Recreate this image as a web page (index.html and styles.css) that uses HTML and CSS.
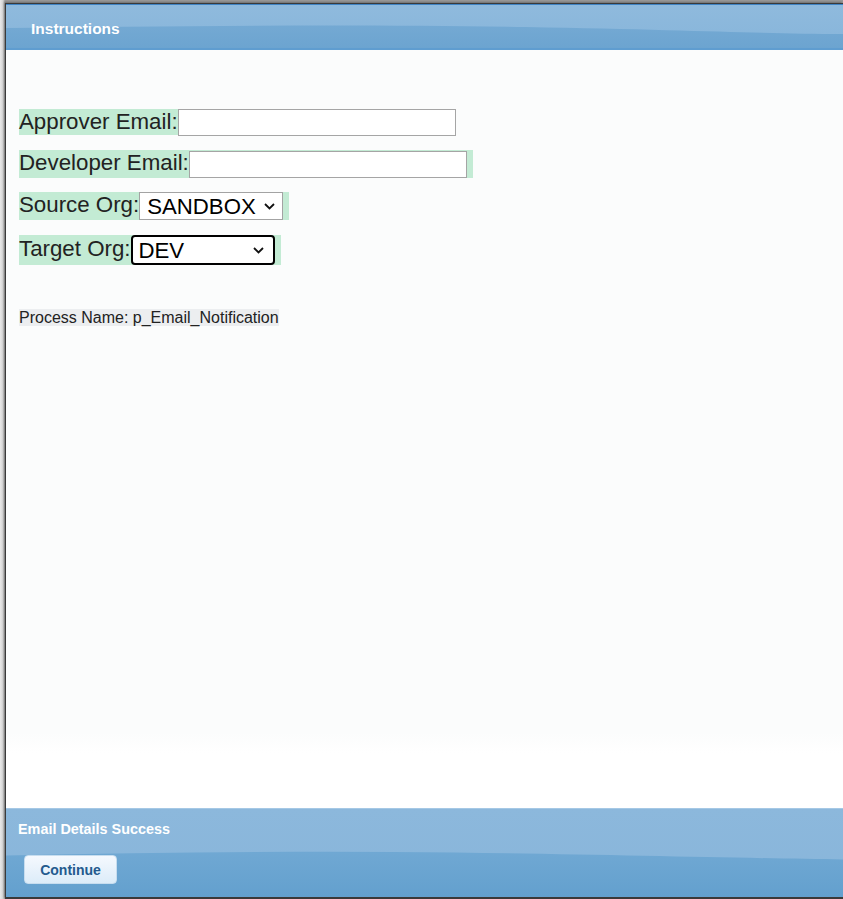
FILE: index.html
```html
<!DOCTYPE html>
<html lang="en">
<head>
<meta charset="utf-8">
<title>Instructions</title>
<link rel="stylesheet" href="styles.css">
</head>
<body>
<div class="window">
  <div class="header">
    <span class="header-title">Instructions</span>
  </div>
  <div class="content">
    <div class="form">
      <div class="row"><span class="lbl">Approver Email:</span><input class="text-input" type="text"></div>
      <div class="row"><span class="lbl">Developer Email:<input class="text-input" type="text"> </span></div>
      <div class="row"><span class="lbl">Source Org:<select class="sel"><option>SANDBOX</option></select> </span></div>
      <div class="row row-last"><span class="lbl">Target Org:<select class="sel sel-focus"><option>DEV</option></select> </span></div>
    </div>
    <div class="process"><span class="process-name">Process Name: p_Email_Notification</span></div>
  </div>
  <div class="footer">
    <div class="footer-title">Email Details Success</div>
    <button class="btn" type="button">Continue</button>
  </div>
</div>
</body>
</html>
```

FILE: styles.css
```css
html, body {
  margin: 0;
  padding: 0;
  height: 899px;
  overflow: hidden;
}
body {
  background: linear-gradient(to right, #e9e9e9 0, #d4d4d4 3px, #9a9a9a 5px);
  font-family: "Liberation Sans", Arial, sans-serif;
}
.window {
  margin: 3px 0 0 5px;
  border-left: 1px solid #3a3a3a;
  border-top: 1px solid #3a3a3a;
  border-bottom: 2px solid #3a3a3a;
  box-shadow: -1px -1px 2px rgba(0, 0, 0, 0.3);
  display: flex;
  flex-direction: column;
  height: 896px;
  box-sizing: border-box;
  background: #fbfcfc;
}
.header {
  height: 43px;
  border-top: 1px solid #3f83c4;
  border-bottom: 2px solid #5f9dd0;
  background-color: #89b6db;
  background-image: url("data:image/svg+xml;utf8,<svg xmlns='http://www.w3.org/2000/svg' viewBox='0 0 837 43' preserveAspectRatio='none'><defs><linearGradient id='a' x1='0' y1='0' x2='0' y2='1'><stop offset='0' stop-color='%238fbadd'/><stop offset='1' stop-color='%2387b5da'/></linearGradient><linearGradient id='b' x1='0' y1='0' x2='0' y2='1'><stop offset='0' stop-color='%2374a9d3'/><stop offset='1' stop-color='%236ca4d0'/></linearGradient></defs><rect width='837' height='43' fill='url(%23a)'/><path d='M0 23 C 150 21 350 19 520 22 S 760 29 837 29 L837 43 L0 43 Z' fill='url(%23b)'/></svg>");
  background-size: 100% 100%;
  display: flex;
  align-items: center;
  padding-left: 25px;
  flex-shrink: 0;
}
.header-title {
  color: #ffffff;
  font-weight: bold;
  font-size: 15.5px;
  margin-top: 4px;
}
.content {
  flex: 1;
  padding: 58px 0 0 13px;
  background: linear-gradient(to bottom, #fbfcfc 0, #fbfcfc 683px, #ffffff 703px);
}
.form {
  display: flex;
  flex-direction: column;
  gap: 14px;
}
.row {
  height: 28px;
  display: flex;
  align-items: center;
  font-size: 22.3px;
  color: #222222;
}
.row-last {
  margin-top: 2px;
}
.lbl {
  background: #c3ebd4;
  line-height: 26px;
  white-space: pre;
}
.text-input {
  width: 278px;
  height: 27px;
  box-sizing: border-box;
  border: 1px solid #a5a5a5;
  background: #ffffff;
  padding: 0 4px;
  margin: 0;
  vertical-align: middle;
  font: 20px "Liberation Sans", Arial, sans-serif;
}
.sel {
  appearance: none;
  -webkit-appearance: none;
  width: 144px;
  height: 28px;
  box-sizing: border-box;
  border: 1px solid #a3a3a3;
  border-radius: 0;
  background-color: #ffffff;
  background-image: url("data:image/svg+xml;utf8,<svg xmlns='http://www.w3.org/2000/svg' width='11' height='7' viewBox='0 0 11 7'><path d='M1 1 L5.5 5.5 L10 1' fill='none' stroke='%23111' stroke-width='1.8'/></svg>");
  background-repeat: no-repeat;
  background-position: right 7px center;
  padding: 0 0 0 7px;
  margin: 0;
  vertical-align: middle;
  color: #000000;
  font: 22.2px "Liberation Sans", Arial, sans-serif;
}
.sel-focus {
  height: 30px;
  border: 2px solid #000000;
  border-radius: 4px;
  padding-left: 6px;
  background-position: right 9px center;
}
.process {
  margin-top: 45px;
  font-size: 16px;
  color: #222222;
}
.process-name {
  background: #eceef0;
  line-height: 18px;
}
.footer {
  height: 89px;
  flex-shrink: 0;
  box-sizing: border-box;
  border-top: 1px solid #a5c8e5;
  background-image: url("data:image/svg+xml;utf8,<svg xmlns='http://www.w3.org/2000/svg' viewBox='0 0 837 89' preserveAspectRatio='none'><defs><linearGradient id='a' x1='0' y1='0' x2='0' y2='1'><stop offset='0' stop-color='%238cb8dc'/><stop offset='1' stop-color='%2388b5da'/></linearGradient><linearGradient id='b' x1='0' y1='0' x2='0' y2='1'><stop offset='0' stop-color='%2370a8d3'/><stop offset='1' stop-color='%2363a0ce'/></linearGradient></defs><rect width='837' height='89' fill='url(%23a)'/><path d='M0 47 C 150 44 300 42 450 44 S 750 50 837 51 L837 89 L0 89 Z' fill='url(%23b)'/></svg>");
  background-size: 100% 100%;
  padding: 12px 0 0 12px;
}
.footer-title {
  color: #ffffff;
  font-weight: bold;
  font-size: 14.4px;
  line-height: 17px;
}
.btn {
  margin: 17px 0 0 6px;
  width: 93px;
  height: 29px;
  border: 1px solid #c7ddef;
  border-radius: 4px;
  background: linear-gradient(to bottom, #f5f9fe 0, #e6f1fb 60%, #dcecf9 100%);
  color: #235a8e;
  font: bold 14px "Liberation Sans", Arial, sans-serif;
  padding: 0;
  display: block;
}
```
